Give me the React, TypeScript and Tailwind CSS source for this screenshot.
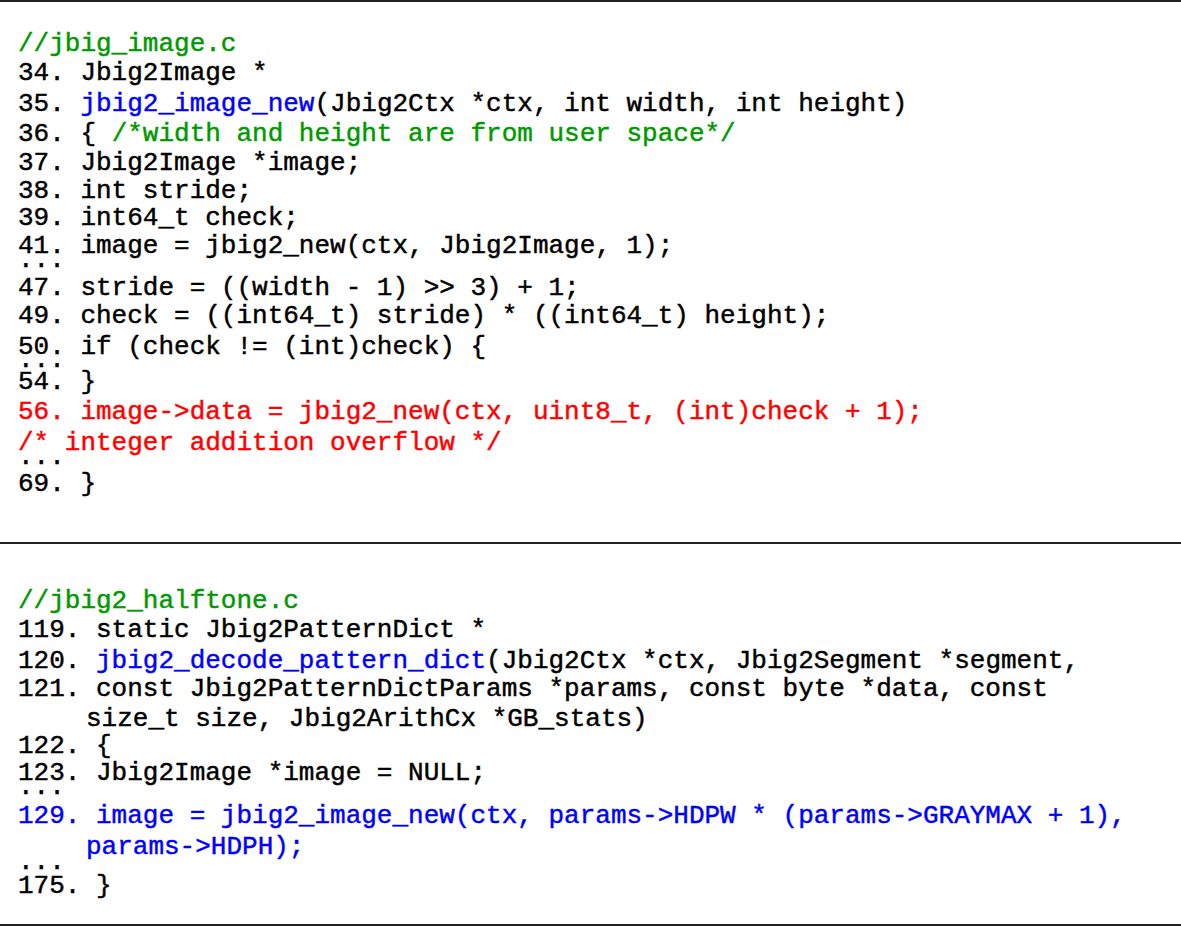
type Seg = { t: string; c?: string };
type Line = { segs: Seg[]; h: string; indent?: boolean };

const G = 'text-[#009900]';
const B = 'text-[#0000ff]';
const R = 'text-[#ff0000]';

const first: Line[] = [
  { segs: [{ t: '//jbig_image.c', c: G }], h: 'h-[29px]' },
  { segs: [{ t: '34. Jbig2Image *' }], h: 'h-[31px]' },
  { segs: [{ t: '35. ' }, { t: 'jbig2_image_new', c: B }, { t: '(Jbig2Ctx *ctx, int width, int height)' }], h: 'h-[30px]' },
  { segs: [{ t: '36. { ' }, { t: '/*width and height are from user space*/', c: G }], h: 'h-[29px]' },
  { segs: [{ t: '37. Jbig2Image *image;' }], h: 'h-[28px]' },
  { segs: [{ t: '38. int stride;' }], h: 'h-[27px]' },
  { segs: [{ t: '39. int64_t check;' }], h: 'h-[28px]' },
  { segs: [{ t: '41. image = jbig2_new(ctx, Jbig2Image, 1);' }], h: 'h-[14px]' },
  { segs: [{ t: '...' }], h: 'h-[28px]' },
  { segs: [{ t: '47. stride = ((width - 1) >> 3) + 1;' }], h: 'h-[28px]' },
  { segs: [{ t: '49. check = ((int64_t) stride) * ((int64_t) height);' }], h: 'h-[31px]' },
  { segs: [{ t: '50. if (check != (int)check) {' }], h: 'h-[13px]' },
  { segs: [{ t: '...' }], h: 'h-[22px]' },
  { segs: [{ t: '54. }' }], h: 'h-[30px]' },
  { segs: [{ t: '56. image->data = jbig2_new(ctx, uint8_t, (int)check + 1);', c: R }], h: 'h-[31px]' },
  { segs: [{ t: '/* integer addition overflow */', c: R }], h: 'h-[14px]' },
  { segs: [{ t: '...' }], h: 'h-[27px]' },
  { segs: [{ t: '69. }' }], h: 'h-[29px]' },
];

const second: Line[] = [
  { segs: [{ t: '//jbig2_halftone.c', c: G }], h: 'h-[29px]' },
  { segs: [{ t: '119. static Jbig2PatternDict *' }], h: 'h-[31px]' },
  { segs: [{ t: '120. ' }, { t: 'jbig2_decode_pattern_dict', c: B }, { t: '(Jbig2Ctx *ctx, Jbig2Segment *segment,' }], h: 'h-[28px]' },
  { segs: [{ t: '121. const Jbig2PatternDictParams *params, const byte *data, const' }], h: 'h-[30px]' },
  { segs: [{ t: 'size_t size, Jbig2ArithCx *GB_stats)' }], h: 'h-[27px]', indent: true },
  { segs: [{ t: '122. {' }], h: 'h-[27px]' },
  { segs: [{ t: '123. Jbig2Image *image = NULL;' }], h: 'h-[14px]' },
  { segs: [{ t: '...' }], h: 'h-[29px]' },
  { segs: [{ t: '129. image = jbig2_image_new(ctx, params->HDPW * (params->GRAYMAX + 1),', c: B }], h: 'h-[31px]' },
  { segs: [{ t: 'params->HDPH);', c: B }], h: 'h-[15px]', indent: true },
  { segs: [{ t: '...' }], h: 'h-[24px]' },
  { segs: [{ t: '175. }' }], h: 'h-[29px]' },
];

function CodeLine({ line }: { line: Line }) {
  return (
    <div className={`${line.h} leading-[29px] whitespace-pre ${line.indent ? 'pl-[68px]' : ''}`}>
      {line.segs.map((s, i) => (
        <span key={i} className={s.c ?? 'text-black'}>
          {s.t}
        </span>
      ))}
    </div>
  );
}

export default function App() {
  return (
    <div className="w-[1181px] h-[927px] bg-white font-['Liberation_Mono',monospace] text-[26px] text-black [-webkit-text-stroke:0.45px] overflow-hidden">
      {/* first listing */}
      <div className="border-t-2 border-[#222] h-[542px] pt-[28px] pl-[18px]">
        {first.map((l, i) => (
          <CodeLine key={i} line={l} />
        ))}
      </div>

      {/* second listing */}
      <div className="border-t-2 border-b-2 border-[#222] h-[384px] pt-[43px] pl-[18px]">
        {second.map((l, i) => (
          <CodeLine key={i} line={l} />
        ))}
      </div>
    </div>
  );
}
